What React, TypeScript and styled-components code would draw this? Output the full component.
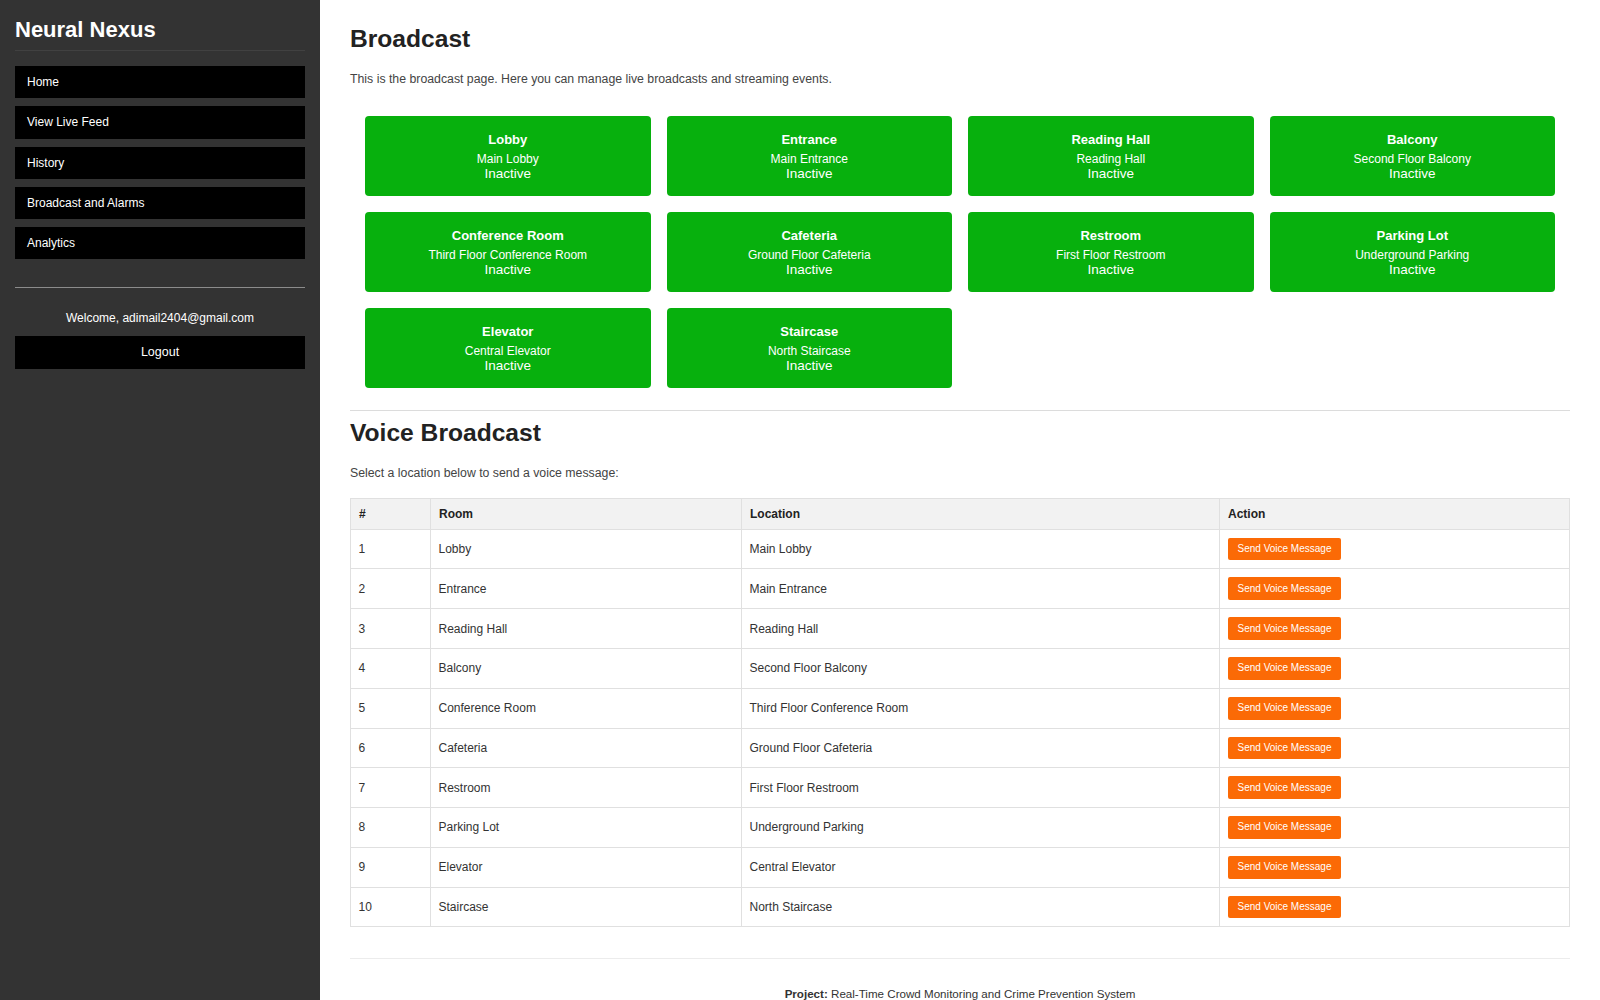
import React from "react";
import styled, { createGlobalStyle } from "styled-components";

const GlobalStyle = createGlobalStyle`
  html, body {
    margin: 0;
    padding: 0;
    background: #ffffff;
  }
  body {
    font-family: "Liberation Sans", Arial, Helvetica, sans-serif;
    color: #222;
  }
  * { box-sizing: border-box; }
`;

const Layout = styled.div`
  display: flex;
  min-height: 100vh;
`;

const Sidebar = styled.aside`
  width: 320px;
  flex-shrink: 0;
  background: #333333;
  padding: 15px;
  color: #fff;
  display: flex;
  flex-direction: column;
`;

const Brand = styled.h2`
  margin: 2px 0 0;
  padding-bottom: 7px;
  font-size: 22px;
  font-weight: bold;
  line-height: normal;
  border-bottom: 1px solid #414141;
  color: #fff;
`;

const NavList = styled.nav`
  display: flex;
  flex-direction: column;
  gap: 8px;
  margin-top: 15px;
`;

const NavItem = styled.a`
  display: flex;
  align-items: center;
  height: 32.3px;
  padding: 0 12px;
  background: #000;
  color: #fff;
  font-size: 12px;
  text-decoration: none;
`;

const SideDivider = styled.hr`
  margin: 28px 0 0;
  border: 0;
  border-top: 1px solid #8c8c8c;
  height: 0;
`;

const Welcome = styled.p`
  margin: 23px 0 0;
  text-align: center;
  font-size: 12px;
  line-height: normal;
  color: #fff;
`;

const LogoutButton = styled.button`
  margin-top: 10.5px;
  height: 32.7px;
  width: 100%;
  background: #000;
  color: #fff;
  border: none;
  font-family: inherit;
  font-size: 12.5px;
  cursor: pointer;
`;

const Main = styled.main`
  flex: 1;
  min-width: 0;
  padding: 25px 30px 20px;
  background: #fff;
`;

const Heading = styled.h1<{ $gap: number }>`
  margin: 0 0 ${(p) => p.$gap}px;
  font-size: 24.6px;
  font-weight: bold;
  line-height: 27.6px;
  color: #222;
`;

const Lead = styled.p<{ $bottom: number }>`
  margin: 0 0 ${(p) => p.$bottom}px;
  font-size: 12.3px;
  line-height: 14.2px;
  color: #444;
`;

const CardGrid = styled.div`
  display: grid;
  grid-template-columns: repeat(4, 1fr);
  gap: 16px;
  padding: 16px 15px;
`;

const Card = styled.div<{ $active?: boolean }>`
  background: ${(p) => (p.$active ? "#d62d20" : "#07b00d")};
  color: #fff;
  border-radius: 4px;
  padding: 16px 10px 0;
  text-align: center;
  height: 80px;
`;

const CardTitle = styled.div`
  font-size: 13px;
  font-weight: bold;
  line-height: 15px;
  margin-bottom: 6.4px;
`;

const CardLocation = styled.div`
  font-size: 12px;
  line-height: 13px;
`;

const CardStatus = styled.div`
  font-size: 13.5px;
  line-height: 15.5px;
`;

const Divider = styled.hr`
  margin: 6px 0 8px;
  border: 0;
  border-top: 1px solid #dcdcdc;
  height: 0;
`;

const Table = styled.table`
  width: 100%;
  border-collapse: collapse;
  font-size: 12px;
`;

const Th = styled.th<{ $w?: number }>`
  width: ${(p) => (p.$w ? `${p.$w}px` : "auto")};
  background: #f2f2f2;
  text-align: left;
  font-weight: bold;
  padding: 8px;
  line-height: 14px;
  border: 1px solid #e0e0e0;
  color: #222;
`;

const Td = styled.td`
  padding: 8px 8px 8px 7.5px;
  border: 1px solid #e0e0e0;
  color: #333;
  line-height: 14px;
  vertical-align: middle;
`;

const SendButton = styled.button`
  background: #fb6a06;
  color: #fff;
  border: none;
  border-radius: 2px;
  font-family: inherit;
  font-size: 10px;
  line-height: 12px;
  padding: 5.4px 10px;
  cursor: pointer;
`;

const Footer = styled.footer`
  margin-top: 31px;
  padding-top: 28px;
  border-top: 1px solid #ececec;
  text-align: center;
  font-size: 11.6px;
  line-height: normal;
  color: #333;
`;

const rooms = [
  { name: "Lobby", location: "Main Lobby" },
  { name: "Entrance", location: "Main Entrance" },
  { name: "Reading Hall", location: "Reading Hall" },
  { name: "Balcony", location: "Second Floor Balcony" },
  { name: "Conference Room", location: "Third Floor Conference Room" },
  { name: "Cafeteria", location: "Ground Floor Cafeteria" },
  { name: "Restroom", location: "First Floor Restroom" },
  { name: "Parking Lot", location: "Underground Parking" },
  { name: "Elevator", location: "Central Elevator" },
  { name: "Staircase", location: "North Staircase" },
];

const navItems = ["Home", "View Live Feed", "History", "Broadcast and Alarms", "Analytics"];

export default function App() {
  return (
    <>
      <GlobalStyle />
      <Layout>
        <Sidebar>
          <Brand>Neural Nexus</Brand>
          <NavList>
            {navItems.map((item) => (
              <NavItem key={item} href="#">
                {item}
              </NavItem>
            ))}
          </NavList>
          <SideDivider />
          <Welcome>Welcome, adimail2404@gmail.com</Welcome>
          <LogoutButton>Logout</LogoutButton>
        </Sidebar>
        <Main>
          <Heading $gap={19}>Broadcast</Heading>
          <Lead $bottom={14}>
            This is the broadcast page. Here you can manage live broadcasts and streaming events.
          </Lead>
          <CardGrid>
            {rooms.map((r) => (
              <Card key={r.name}>
                <CardTitle>{r.name}</CardTitle>
                <CardLocation>{r.location}</CardLocation>
                <CardStatus>Inactive</CardStatus>
              </Card>
            ))}
          </CardGrid>
          <Divider />
          <Heading as="h2" $gap={20}>Voice Broadcast</Heading>
          <Lead $bottom={17}>Select a location below to send a voice message:</Lead>
          <Table>
            <thead>
              <tr>
                <Th $w={80}>#</Th>
                <Th $w={311}>Room</Th>
                <Th $w={478}>Location</Th>
                <Th>Action</Th>
              </tr>
            </thead>
            <tbody>
              {rooms.map((r, i) => (
                <tr key={r.name}>
                  <Td>{i + 1}</Td>
                  <Td>{r.name}</Td>
                  <Td>{r.location}</Td>
                  <Td>
                    <SendButton>Send Voice Message</SendButton>
                  </Td>
                </tr>
              ))}
            </tbody>
          </Table>
          <Footer>
            <strong>Project:</strong> Real-Time Crowd Monitoring and Crime Prevention System
          </Footer>
        </Main>
      </Layout>
    </>
  );
}
